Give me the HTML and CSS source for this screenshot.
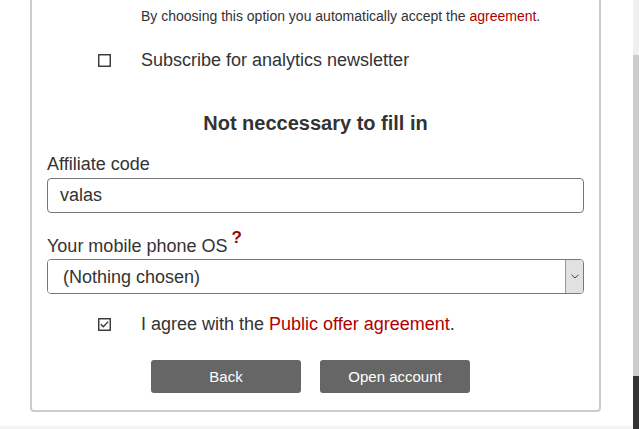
FILE: index.html
```html
<!DOCTYPE html>
<html lang="en">
<head>
    <meta charset="UTF-8">
    <meta name="viewport" content="width=device-width, initial-scale=1.0">
    <title>Open account</title>
    <link rel="stylesheet" href="styles.css">
</head>
<body>
    <div class="page">
        <div class="card">
            <p class="note">By choosing this option you automatically accept the <a href="#">agreement</a>.</p>

            <label class="check-row subscribe">
                <span class="box">
                    <svg width="13" height="13" viewBox="0 0 13 13"><rect x="0.75" y="0.75" width="11.5" height="11.5" fill="#fff" stroke="#333" stroke-width="1.4"/></svg>
                </span>
                <span>Subscribe for analytics newsletter</span>
            </label>

            <h2>Not neccessary to fill in</h2>

            <label class="field-label" for="affiliate">Affiliate code</label>
            <input class="text-input" type="text" id="affiliate" value="valas">

            <label class="field-label os-label" for="os">Your mobile phone OS <sup class="hint">?</sup></label>
            <div class="select">
                <select id="os">
                    <option>(Nothing chosen)</option>
                    <option>Android</option>
                    <option>iOS</option>
                </select>
                <span class="select-arrow">
                    <svg width="8" height="5" viewBox="0 0 8 5"><polyline points="0.5,0.8 4,4 7.5,0.8" fill="none" stroke="#444" stroke-width="1"/></svg>
                </span>
            </div>

            <label class="check-row agree">
                <span class="box">
                    <svg width="13" height="13" viewBox="0 0 13 13"><rect x="0.75" y="0.75" width="11.5" height="11.5" fill="#fff" stroke="#333" stroke-width="1.4"/><polyline points="2.8,6.2 5.3,8.8 10.2,3.6" fill="none" stroke="#333" stroke-width="1.3"/></svg>
                </span>
                <span>I agree with the <a href="#">Public offer agreement</a>.</span>
            </label>

            <div class="actions">
                <button type="button">Back</button>
                <button type="submit">Open account</button>
            </div>
        </div>
        <div class="footer"></div>
    </div>

    <div class="scrollbar">
        <div class="track-top"></div>
        <div class="track"></div>
        <div class="thumb"></div>
    </div>
</body>
</html>
```

FILE: styles.css
```css
html, body {
    height: 100%;
}
body {
    font-family: "Liberation Sans", Arial, sans-serif;
    color: #333;
    margin: 0;
    padding: 0;
    display: flex;
    background: #fff;
    overflow: hidden;
}
.page {
    flex: 1;
    padding: 0 32px 0 30px;
}
.card {
    border: 2px solid #ccc;
    border-top: none;
    border-radius: 0 0 4px 4px;
    padding: 0 15px 17px 15px;
    display: flex;
    flex-direction: column;
}
a {
    color: #b00000;
    text-decoration: none;
}
.note {
    font-size: 14px;
    line-height: 18px;
    margin: 7px 0 0 0;
    padding-left: 94px;
}
.check-row {
    display: flex;
    align-items: center;
    font-size: 18px;
    line-height: 24px;
    padding-left: 51px;
}
.check-row .box {
    width: 13px;
    height: 13px;
    margin-right: 30px;
    display: flex;
}
.subscribe {
    margin-top: 23px;
}
h2 {
    font-size: 20px;
    line-height: 24px;
    text-align: center;
    margin: 39px 0 0 0;
}
.field-label {
    font-size: 18px;
    line-height: 22px;
    margin-top: 18px;
}
.os-label {
    margin-top: 22px;
}
.hint {
    color: #a00000;
    font-weight: bold;
    font-size: 17px;
    line-height: 0;
    position: relative;
    top: -2px;
    margin-left: -1px;
}
.text-input {
    margin-top: 3px;
    height: 35px;
    box-sizing: border-box;
    border: 1px solid #777;
    border-radius: 4px;
    padding: 0 12px;
    font-family: inherit;
    font-size: 18px;
    color: #333;
    width: 537px;
}
.select {
    margin-top: 2px;
    height: 35px;
    box-sizing: border-box;
    width: 537px;
    border: 1px solid #777;
    border-radius: 4px;
    display: flex;
    overflow: hidden;
}
.select select {
    flex: 1;
    appearance: none;
    border: none;
    background: #fff;
    font-family: inherit;
    font-size: 18px;
    color: #333;
    padding: 0 0 0 15px;
    outline: none;
}
.select-arrow {
    width: 17px;
    background: #e1e1e1;
    border-left: 1px solid #999;
    display: flex;
    align-items: center;
    justify-content: center;
}
.agree {
    margin-top: 18px;
}
.actions {
    display: flex;
    gap: 19px;
    padding-left: 104px;
    margin-top: 24px;
}
.actions button {
    width: 150px;
    height: 33px;
    background: #666;
    color: #fff;
    border: none;
    border-radius: 3px;
    font-family: inherit;
    font-size: 15px;
    cursor: pointer;
}
.footer {
    margin: 14px -32px 0 -30px;
    height: 4px;
    background: #f4f4f4;
}
.scrollbar {
    width: 7px;
    display: flex;
    flex-direction: column;
}
.track-top {
    height: 55px;
    background: #f0f0f0;
}
.track {
    height: 321px;
    background: #cdcdcd;
}
.thumb {
    flex: 1;
    background: #333;
}
```
